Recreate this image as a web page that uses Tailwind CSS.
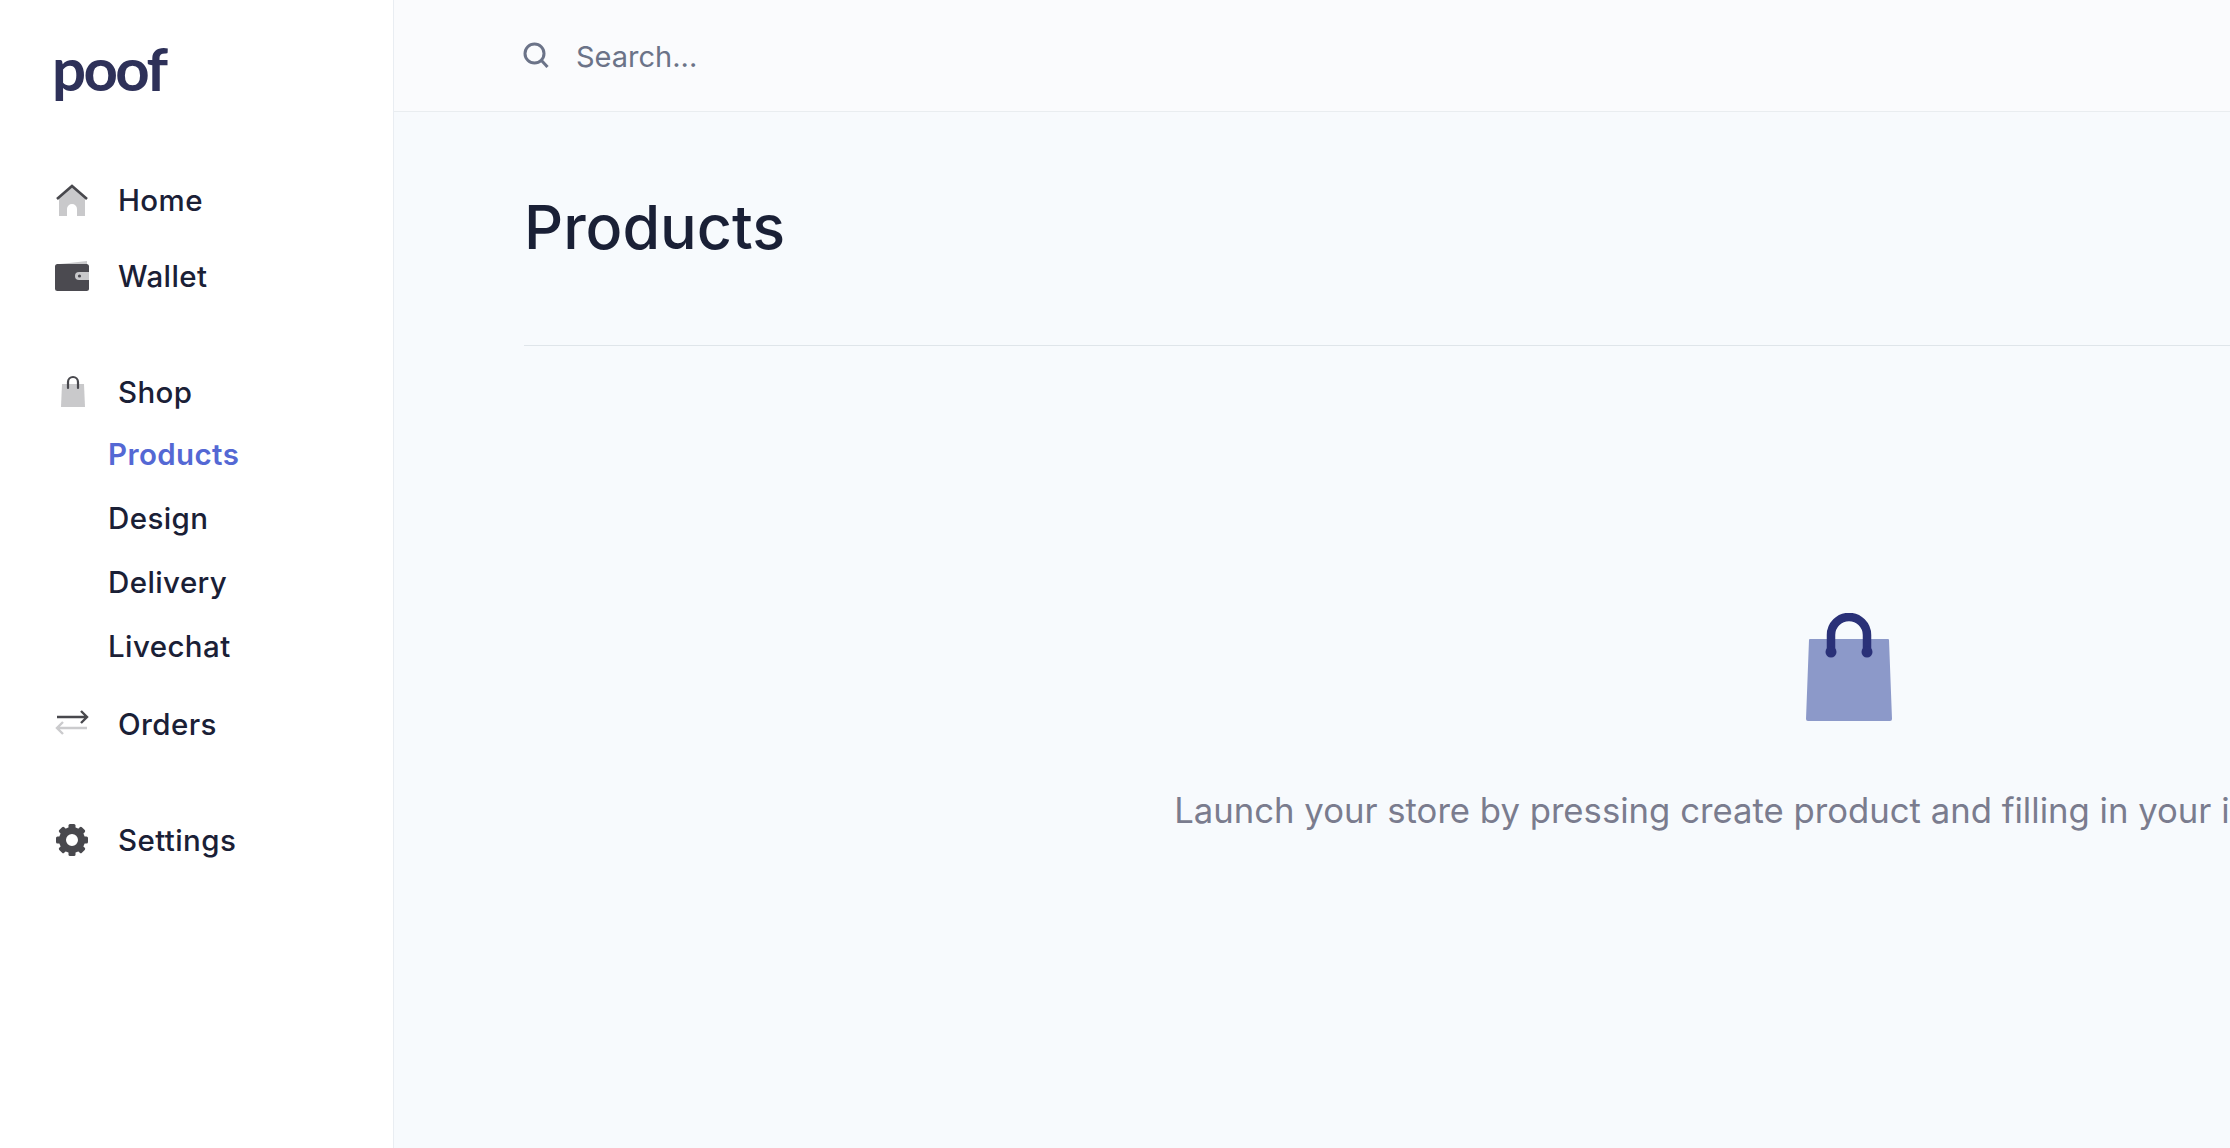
<!DOCTYPE html>
<html lang="en">
<head>
  <meta charset="UTF-8">
  <title>Products - poof</title>
  <script src="https://cdn.jsdelivr.net/npm/@tailwindcss/browser@4"></script>
</head>
<body class="h-screen w-screen overflow-hidden bg-[#f7fafd] font-[Inter,sans-serif]">
  <div class="flex h-full">
    <!-- Sidebar -->
    <aside class="w-[394px] shrink-0 h-full bg-white border-r border-[#e9edf2]">
      <div class="h-[162px] pl-[52px] pt-[28px]">
        <div class="font-[Lato,sans-serif] text-[60px] leading-[80px] font-bold tracking-[-2.6px] text-[#2e3159]">poof</div>
      </div>
      <nav class="text-[29.5px] tracking-[0.4px] font-medium text-[#1a2036]">
        <a class="flex items-center h-[76px] pl-[54px]">
          <span class="w-[64px] flex">
            <svg width="36" height="36" viewBox="0 0 36 36" fill="none">
              <path d="M5 15 18 5 31 15V34H23V27a5 5 0 0 0-10 0V34H5Z" fill="#c9c9cb"/>
              <path d="M3 17 18 4 33 17" stroke="#48484d" stroke-width="2.6"/>
            </svg>
          </span>
          <span>Home</span>
        </a>
        <a class="flex items-center h-[76px] pl-[54px]">
          <span class="w-[64px] flex">
            <svg width="36" height="32" viewBox="0 0 36 32" fill="none">
              <path d="M6 4 33 1V6H6Z" fill="#c9c9cb"/>
              <rect x="1" y="4" width="34" height="27" rx="2.5" fill="#4b4a50"/>
              <path d="M35 12H25a3.5 3.5 0 0 0 0 8H35Z" fill="#c9c9cb"/>
              <circle cx="25.5" cy="16" r="1.6" fill="#4b4a50"/>
            </svg>
          </span>
          <span>Wallet</span>
        </a>
        <a class="flex items-center h-[76px] pl-[54px] mt-[40px]">
          <span class="w-[64px] flex pl-[6px] -mt-[3px]">
            <svg width="26" height="32" viewBox="0 0 26 32" fill="none">
              <path d="M2 9H24L25 32H1Z" fill="#c9c9cb"/>
              <path d="M8 13V7a5 5 0 0 1 10 0V13" stroke="#48484d" stroke-width="2.2" stroke-linecap="round"/>
            </svg>
          </span>
          <span>Shop</span>
        </a>
        <div class="-mt-[8px] pl-[108px]">
          <a class="flex items-center h-[64px] font-semibold text-[#5468d4]">Products</a>
          <a class="flex items-center h-[64px]">Design</a>
          <a class="flex items-center h-[64px]">Delivery</a>
          <a class="flex items-center h-[64px]">Livechat</a>
        </div>
        <a class="flex items-center h-[76px] pl-[54px] mt-[8px]">
          <span class="w-[64px] flex">
            <svg width="36" height="30" viewBox="0 0 36 30" fill="none" stroke-width="2.4">
              <path d="M3 8H33M27 2 33 8 27 14" stroke="#48484d"/>
              <path d="M33 19H3M9 13 3 19 9 25" stroke="#cbcbcd"/>
            </svg>
          </span>
          <span>Orders</span>
        </a>
        <a class="flex items-center h-[76px] pl-[54px] mt-[40px]">
          <span class="w-[64px] flex">
            <svg width="36" height="36" viewBox="0 0 36 36" fill="#48484d">
              <circle cx="18" cy="18" r="9.5" fill="none" stroke="#48484d" stroke-width="7"/>
              <rect x="14.5" y="2" width="7" height="7" rx="1.5"/>
              <rect x="14.5" y="2" width="7" height="7" rx="1.5" transform="rotate(45 18 18)"/>
              <rect x="14.5" y="2" width="7" height="7" rx="1.5" transform="rotate(90 18 18)"/>
              <rect x="14.5" y="2" width="7" height="7" rx="1.5" transform="rotate(135 18 18)"/>
              <rect x="14.5" y="2" width="7" height="7" rx="1.5" transform="rotate(180 18 18)"/>
              <rect x="14.5" y="2" width="7" height="7" rx="1.5" transform="rotate(225 18 18)"/>
              <rect x="14.5" y="2" width="7" height="7" rx="1.5" transform="rotate(270 18 18)"/>
              <rect x="14.5" y="2" width="7" height="7" rx="1.5" transform="rotate(315 18 18)"/>
            </svg>
          </span>
          <span>Settings</span>
        </a>
      </nav>
    </aside>

    <!-- Main -->
    <main class="flex-1 min-w-0 h-full overflow-hidden">
      <header class="h-[112px] bg-[#fafbfd] border-b border-[#e9edf0] pl-[129px] flex items-center gap-[27px]">
        <svg class="w-[26px] h-[26px] -mt-[1px]" viewBox="0 0 26 26" fill="none" stroke="#6b7388" stroke-width="3">
          <circle cx="11.5" cy="11.5" r="9.5"/>
          <path d="M18.5 18.5 24.5 25"/>
        </svg>
        <input type="text" placeholder="Search..." class="w-[600px] bg-transparent outline-none text-[29px] pt-[2px] placeholder-[#6b7388]">
      </header>
      <div class="w-[2650px] ml-[130px]">
        <div class="h-[234px] border-b border-[#dfe5ea] flex items-center pb-[2px]">
          <h1 class="text-[61px] font-medium text-[#1a2036]">Products</h1>
        </div>
        <div class="flex flex-col items-center pt-[267px]">
          <svg width="86" height="108" viewBox="0 0 86 108" fill="none">
            <path d="M4 26H82Q83 26 83 27L86 106Q86 108 84 108H2Q0 108 0 106L3 27Q3 26 4 26Z" fill="#8c99c9"/>
            <path d="M25 39V22a18 18 0 0 1 36 0V39" stroke="#2a3178" stroke-width="8.5"/>
            <circle cx="25" cy="39" r="5.5" fill="#2a3178"/>
            <circle cx="61" cy="39" r="5.5" fill="#2a3178"/>
          </svg>
          <p class="mt-[63px] text-[34.7px] text-[#7a7c8e] whitespace-nowrap">Launch your store by pressing create product and filling in your information to sell.</p>
        </div>
      </div>
    </main>
  </div>
</body>
</html>
